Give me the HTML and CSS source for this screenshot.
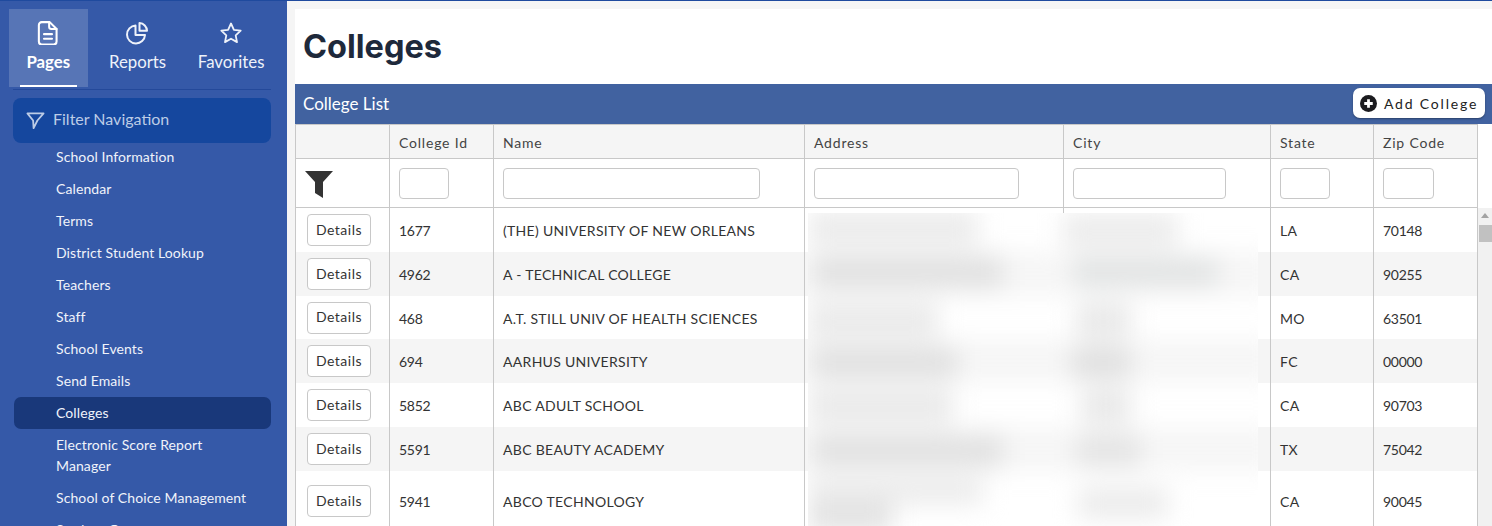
FILE: index.html
```html
<!DOCTYPE html>
<html lang="en">
<head>
<meta charset="utf-8">
<title>Colleges</title>
<link rel="stylesheet" href="styles.css">
</head>
<body>
<div class="app">
  <aside class="sidebar">
    <nav class="tabs">
      <a class="tab active">
        <svg class="tab-icon" viewBox="2 1.500 20 21" fill="none" stroke="currentColor" stroke-width="1.800" stroke-linejoin="round" stroke-linecap="round"><path d="M6.500 2.500h7l6 6v11a2.500 2.500 0 0 1-2.500 2.500H6.500A2.500 2.500 0 0 1 4 19.500v-14.500a2.500 2.500 0 0 1 2.500-2.500z"/><path d="M13 2.500v4a2 2 0 0 0 2 2h4.500"/><path d="M8.500 13h7M8.500 17h7"/></svg>
        <span>Pages</span>
      </a>
      <a class="tab">
        <svg class="tab-icon" viewBox="0 0 24 24" fill="none" stroke="currentColor" stroke-width="2" stroke-linejoin="round"><path d="M10.500 4.500a9 9 0 1 0 9.500 9.500h-9.500z"/><path d="M14.500 2a8 8 0 0 1 7.500 7.800h-7.500z"/></svg>
        <span>Reports</span>
      </a>
      <a class="tab">
        <svg class="tab-icon" viewBox="0 0 24 24" fill="none" stroke="currentColor" stroke-width="1.800" stroke-linejoin="round"><path d="M12 2.500l2.900 6.300 6.800.8-5 4.700 1.300 6.800-6-3.400-6 3.400 1.300-6.800-5-4.700 6.800-.8z"/></svg>
        <span>Favorites</span>
      </a>
    </nav>
    <div class="filter-nav">
      <svg class="filter-icon" viewBox="0 0 20 20" fill="none" stroke="currentColor" stroke-width="1.900" stroke-linejoin="round"><path d="M1.500 2.500h17l-6.500 7.500-4 8-.5-8z"/></svg>
      <span>Filter Navigation</span>
    </div>
    <ul class="menu">
      <li><a>School Information</a></li>
      <li><a>Calendar</a></li>
      <li><a>Terms</a></li>
      <li><a>District Student Lookup</a></li>
      <li><a>Teachers</a></li>
      <li><a>Staff</a></li>
      <li><a>School Events</a></li>
      <li><a>Send Emails</a></li>
      <li class="current"><a>Colleges</a></li>
      <li><a>Electronic Score Report Manager</a></li>
      <li><a>School of Choice Management</a></li>
      <li><a>Student Groups</a></li>
    </ul>
  </aside>
  <main class="main">
    <header class="page-head"><h1>Colleges</h1></header>
    <section class="panel">
      <div class="panel-bar">
        <h2>College List</h2>
        <button class="add-btn" type="button">
          <svg viewBox="0 0 16 16"><circle cx="8" cy="8" r="8" fill="#1b1b1f"/><path d="M8 4v8M4 8h8" stroke="#fff" stroke-width="2.600"/></svg>
          Add College
        </button>
      </div>
      <div class="grid-wrap">
        <table class="grid grid-head">
          <colgroup><col class="c0"><col class="c1"><col class="c2"><col class="c3"><col class="c4"><col class="c5"><col class="c6"></colgroup>
          <thead>
            <tr class="titles"><th></th><th>College Id</th><th>Name</th><th>Address</th><th>City</th><th>State</th><th>Zip Code</th></tr>
            <tr class="filters">
              <td><svg class="funnel" viewBox="0 0 28 28"><path d="M0 0h28L18 11v16l-8-5V11z"/></svg></td>
              <td><input class="in-id" type="text"></td>
              <td><input class="in-name" type="text"></td>
              <td><input class="in-addr" type="text"></td>
              <td><input class="in-city" type="text"></td>
              <td><input class="in-state" type="text"></td>
              <td><input class="in-zip" type="text"></td>
            </tr>
          </thead>
        </table>
        <div class="grid-body">
          <table class="grid">
            <colgroup><col class="c0"><col class="c1"><col class="c2"><col class="c3"><col class="c4"><col class="c5"><col class="c6"></colgroup>
            <tbody>
              <tr><td><button class="details" type="button">Details</button></td><td>1677</td><td>(THE) UNIVERSITY OF NEW ORLEANS</td><td></td><td></td><td>LA</td><td>70148</td></tr>
              <tr><td><button class="details" type="button">Details</button></td><td>4962</td><td>A - TECHNICAL COLLEGE</td><td></td><td></td><td>CA</td><td>90255</td></tr>
              <tr><td><button class="details" type="button">Details</button></td><td>468</td><td>A.T. STILL UNIV OF HEALTH SCIENCES</td><td></td><td></td><td>MO</td><td>63501</td></tr>
              <tr><td><button class="details" type="button">Details</button></td><td>694</td><td>AARHUS UNIVERSITY</td><td></td><td></td><td>FC</td><td>00000</td></tr>
              <tr><td><button class="details" type="button">Details</button></td><td>5852</td><td>ABC ADULT SCHOOL</td><td></td><td></td><td>CA</td><td>90703</td></tr>
              <tr><td><button class="details" type="button">Details</button></td><td>5591</td><td>ABC BEAUTY ACADEMY</td><td></td><td></td><td>TX</td><td>75042</td></tr>
              <tr class="tall"><td><button class="details" type="button">Details</button></td><td>5941</td><td>ABCO TECHNOLOGY</td><td></td><td></td><td>CA</td><td>90045</td></tr>
            </tbody>
          </table>
          <div class="scrollbar"><span class="arrow"></span><span class="thumb"></span></div>
          <div class="redaction"><div class="smear"></div></div>
        </div>
      </div>
    </section>
  </main>
</div>
</body>
</html>
```

FILE: styles.css
```css
* { box-sizing: border-box; }
html, body { margin: 0; height: 100%; overflow: hidden; }
body { font-family: "Lato", "Liberation Sans", sans-serif; background: #f5f5f5; }

.app {
  display: flex;
  height: 526px;
  overflow: hidden;
  border-top: 1px solid #1f4a9e;
}

/* Sidebar */
.sidebar {
  flex: 0 0 287px;
  background: #3559a8;
  color: #fff;
  padding: 8px 16px 0 13px;
  overflow: hidden;
}
.tabs {
  display: flex;
  height: 81px;
  border-bottom: 1px solid #24499a;
}
.tab {
  display: flex;
  flex-direction: column;
  align-items: center;
  height: 78px;
  padding-top: 12px;
  font-size: 16.800px;
  color: #eef2fa;
  position: relative;
}
.tab:nth-child(1) { width: 79px; margin-left: -4px; margin-right: 12px; }
.tab:nth-child(2) { width: 76px; margin-right: 16px; }
.tab:nth-child(3) { width: 80px; }
.tab span { margin-top: 7px; line-height: 20px; }
.tab-icon { width: 24px; height: 24px; }
.tab.active {
  background: rgba(255, 255, 255, 0.17);
  font-weight: 700;
  color: #fff;
}
.tab.active::after {
  content: "";
  position: absolute;
  left: 11px;
  right: 11px;
  bottom: 0;
  height: 2px;
  background: #fff;
}
.filter-nav {
  display: flex;
  align-items: center;
  gap: 8px;
  height: 45px;
  margin-top: 8px;
  padding: 0 0 5px 13px;
  background: #15479e;
  border-radius: 8px;
  font-size: 16px;
  color: #bcccE6;
}
.filter-icon { width: 19px; height: 19px; flex: none; margin-top: 5px; }
.menu {
  list-style: none;
  margin: -2px 0 0;
  padding: 0;
  font-size: 14px;
  line-height: 21px;
  letter-spacing: 0.1px;
  color: #f0f3fa;
}
.menu li { padding: 5px 20px 6px 43px; }
.menu li.current {
  margin-left: 1px;
  padding-left: 42px;
  background: #19387a;
  border-radius: 7px;
}

/* Main */
.main { flex: 1; min-width: 0; padding: 8px 0 0 8px; }
.page-head { background: #fff; height: 75px; padding: 18px 0 0 8px; }
.page-head h1 {
  margin: 0;
  font-family: "Inter", "Lato", sans-serif;
  font-size: 32.500px;
  line-height: 40px;
  font-weight: 700;
  color: #1e293b;
}
.panel-bar {
  display: flex;
  align-items: center;
  justify-content: space-between;
  height: 40px;
  padding: 0 7px 2px 8px;
  background: #4162a0;
}
.panel-bar h2 { margin: 0; font-size: 17px; font-weight: 400; color: #fff; }
.add-btn {
  display: flex;
  align-items: center;
  gap: 7px;
  height: 30px;
  width: 132px;
  padding: 0 0 0 7px;
  border: 0;
  border-radius: 7px;
  background: #fff;
  font-family: inherit;
  font-size: 14px;
  letter-spacing: 1.800px;
  color: #222;
  box-shadow: 0 1px 2px rgba(0, 0, 0, 0.35);
}
.add-btn svg { width: 17px; height: 17px; flex: none; }

/* Grid */
.grid-wrap { background: #fff; height: 402px; overflow: hidden; }
.grid {
  width: 1182px;
  table-layout: fixed;
  border-collapse: collapse;
  font-size: 14px;
  color: #333;
  letter-spacing: 0.3px;
}
.c0 { width: 94px; }
.c1 { width: 104px; }
.c2 { width: 311px; }
.c3 { width: 259px; }
.c4 { width: 207px; }
.c5 { width: 103px; }
.c6 { width: 104px; }
.grid th, .grid td {
  border-left: 1px solid #c8c8c8;
  border-right: 1px solid #c8c8c8;
  padding: 0 9px;
  text-align: left;
  font-weight: 400;
}
.titles th {
  height: 34px;
  padding-top: 2px;
  background: #f5f5f5;
  color: #444;
  letter-spacing: 0.8px;
  border-top: 1px solid #c8c8c8;
  border-bottom: 1px solid #c8c8c8;
}
.filters td {
  height: 49px;
  background: #fff;
  border-bottom: 1px solid #c8c8c8;
}
.filters input {
  display: block;
  height: 31px;
  margin-top: 1px;
  border: 1px solid #c8c8c8;
  border-radius: 4px;
  background: #fff;
}
.in-id { width: 50px; }
.in-name { width: 257px; }
.in-addr { width: 205px; }
.in-city { width: 153px; }
.in-state { width: 50px; }
.in-zip { width: 51px; }
.funnel { display: block; width: 28px; height: 28px; margin: 3px 0 0 0; fill: #333; }

.grid-body { position: relative; height: 318px; overflow: hidden; }
.grid-body tbody td { height: 44px; background: #fff; padding-top: 1px; }
.grid-body tbody tr:nth-child(3) td { height: 43px; }
.grid-body tbody td:first-child { padding: 0 0 0 11px; }
.grid-body tbody td:nth-child(2), .grid-body tbody td:nth-child(7) { letter-spacing: -0.300px; }
.grid-body tbody tr:nth-child(even) td { background: #f5f5f5; }
.grid-body tbody tr.tall td { height: 60px; }
.details {
  display: block;
  width: 64px;
  height: 32px;
  padding: 0 0 2px;
  border: 1px solid #c8c8c8;
  border-radius: 4px;
  background: #fff;
  font-family: inherit;
  font-size: 14px;
  letter-spacing: 0.5px;
  color: #333;
}
.scrollbar {
  position: absolute;
  top: 0;
  right: 0;
  bottom: 0;
  width: 14px;
  background: #f1f1f1;
}
.arrow {
  position: absolute;
  top: 5px;
  left: 3px;
  border: 4px solid transparent;
  border-top: 0;
  border-bottom: 5px solid #a3a3a3;
}
.thumb {
  position: absolute;
  top: 17px;
  left: 1px;
  right: 0;
  height: 17px;
  background: #c1c1c1;
}
.redaction {
  position: absolute;
  left: 513px;
  top: 5px;
  width: 450px;
  bottom: 0;
  overflow: hidden;
  background: #fff;
}
.smear {
  position: absolute;
  inset: -20px;
  filter: blur(12px);
  background-repeat: no-repeat;
  background-image:
    linear-gradient(#ebebeb, #ebebeb), linear-gradient(#ececec, #ececec),
    linear-gradient(#e1e1e1, #e1e1e1), linear-gradient(#e1e3e3, #e1e3e3),
    linear-gradient(#eaeaea, #eaeaea), linear-gradient(#e9e9e9, #e9e9e9),
    linear-gradient(#e0e0e0, #e0e0e0), linear-gradient(#dfdfdf, #dfdfdf),
    linear-gradient(#e9e9e9, #e9e9e9), linear-gradient(#e8e8e8, #e8e8e8),
    linear-gradient(#e1e1e1, #e1e1e1), linear-gradient(#e4e4e4, #e4e4e4),
    linear-gradient(#ebebeb, #ebebeb), linear-gradient(#e2e2e2, #e2e2e2), linear-gradient(#ebebeb, #ebebeb),
    linear-gradient(#f6f6f6, #f6f6f6), linear-gradient(#f6f6f6, #f6f6f6), linear-gradient(#f6f6f6, #f6f6f6);
  background-size:
    170px 34px, 115px 34px,
    190px 32px, 145px 28px,
    130px 34px, 55px 34px,
    145px 30px, 60px 30px,
    145px 32px, 50px 32px,
    190px 32px, 65px 32px,
    175px 26px, 85px 34px, 90px 30px,
    490px 44px, 490px 44px, 490px 44px;
  background-position:
    20px 18px, 275px 20px,
    25px 63px, 285px 65px,
    20px 110px, 288px 110px,
    25px 155px, 283px 155px,
    20px 197px, 293px 197px,
    25px 242px, 288px 242px,
    20px 285px, 20px 305px, 290px 295px,
    0 59px, 0 146px, 0 234px;
}
```
